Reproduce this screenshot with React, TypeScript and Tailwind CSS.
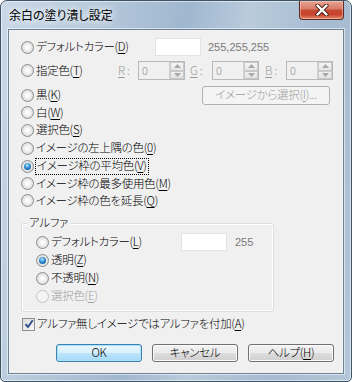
import React from "react";

const U = ({ c }: { c: string }) => (
  <span className="underline underline-offset-[2px] decoration-[1px]">{c}</span>
);

function Radio({ checked = false, disabled = false }: { checked?: boolean; disabled?: boolean }) {
  return (
    <span
      className={
        "inline-flex w-[13px] h-[13px] rounded-full border items-center justify-center shrink-0 " +
        (disabled
          ? "border-[#c4c4c4] bg-[#f4f4f4]"
          : "border-[#8a8c8e] bg-[radial-gradient(circle_at_50%_50%,#fbfbfb_20%,#e4e4e4_60%,#cfcfcf_100%)]")
      }
    >
      {checked && (
        <span className="w-[7px] h-[7px] rounded-full bg-[radial-gradient(circle_at_45%_35%,#b8ecff_0%,#2d8ad0_45%,#0d4d8a_100%)]" />
      )}
    </span>
  );
}

function Spin() {
  return (
    <div className="flex h-[19px] w-[47px] border border-[#b5babe] bg-[#f0f0f0]">
      <div className="flex-1 flex items-center pl-[3px] text-[11px] text-[#8d8d8d] leading-none">0</div>
      <div className="flex flex-col w-[15px] border-l border-[#d2d2d2]">
        <div className="flex-1 flex items-center justify-center border border-[#c9c9c9] bg-[linear-gradient(#f6f6f6,#e6e6e6)]">
          <svg width="7" height="4" viewBox="0 0 7 4"><path d="M0 4 L3.5 0 L7 4 Z" fill="#a8a8a8" /></svg>
        </div>
        <div className="flex-1 flex items-center justify-center border border-[#c9c9c9] bg-[linear-gradient(#f2f2f2,#e2e2e2)]">
          <svg width="7" height="4" viewBox="0 0 7 4"><path d="M0 0 L3.5 4 L7 0 Z" fill="#a8a8a8" /></svg>
        </div>
      </div>
    </div>
  );
}

function Row({ children, className = "" }: { children: React.ReactNode; className?: string }) {
  return <div className={"flex items-center " + className}>{children}</div>;
}

function Btn({ children, def = false }: { children: React.ReactNode; def?: boolean }) {
  return (
    <div
      className={
        "w-[86px] h-[18px] rounded-[3px] border flex items-center justify-center leading-none " +
        (def
          ? "border-[#3c7fb1] bg-[linear-gradient(#eaf6fd_0%,#d9f0fc_50%,#bee6fd_51%,#a7d9f5_100%)] shadow-[inset_0_0_0_1px_#a8e4fb]"
          : "border-[#707070] bg-[linear-gradient(#f2f2f2_0%,#ebebeb_50%,#dddddd_51%,#cfcfcf_100%)] shadow-[inset_0_0_0_1px_#fcfcfc]")
      }
    >
      {children}
    </div>
  );
}

export default function App() {
  return (
    <div className="w-[352px] h-[382px] font-['Noto_Sans_CJK_JP',sans-serif] font-light [font-feature-settings:'palt'] text-black">
      <div className="w-full h-full rounded-t-[7px] rounded-b-[5px] border border-[#3f5366] bg-[linear-gradient(100deg,#c9d8e6_0%,#b5c8db_25%,#9fb7cf_45%,#b9cbdc_60%,#a5bbd1_80%,#b4c6d8_100%)] shadow-[inset_0_0_0_1px_rgba(255,255,255,0.55)] flex flex-col px-[7px] pb-[7px]">
        <div className="h-[28px] flex items-start justify-between">
          <div className="pt-[6px] pl-[1px] text-[12px] font-normal leading-[16px] [text-shadow:0_0_6px_#fff,0_0_10px_rgba(255,255,255,0.8)]">
            余白の塗り潰し設定
          </div>
          <div className="w-[45px] h-[19px] rounded-b-[4px] border border-t-0 border-[#5d2b23] bg-[linear-gradient(#e8a493_0%,#d67a66_45%,#c64a33_50%,#c9432c_75%,#e28b6b_100%)] shadow-[inset_0_0_0_1px_rgba(255,220,210,0.45)] flex items-center justify-center">
            <svg width="14" height="12" viewBox="0 0 14 12">
              <path d="M2.5 1.5 L11.5 10.5 M11.5 1.5 L2.5 10.5" stroke="#4a1f18" strokeWidth="4.2" strokeLinecap="round" />
              <path d="M2.5 1.5 L11.5 10.5 M11.5 1.5 L2.5 10.5" stroke="#ffffff" strokeWidth="2.4" strokeLinecap="round" />
            </svg>
          </div>
        </div>
        <div className="flex-1 bg-[#f0f0f0] border border-[#6e8398] shadow-[0_0_0_1px_rgba(255,255,255,0.55)] flex flex-col pl-[12px] pt-[8px] text-[11.5px] tracking-[-0.3px] leading-none">
          <Row className="h-[18px]">
            <div className="w-[134px] flex items-center gap-[2px]">
              <Radio />
              <span>デフォルトカラー(<U c="D" />)</span>
            </div>
            <div className="w-[46px] h-[18px] bg-white border border-[#e3e3e3]" />
            <span className="ml-[7px] text-[#7a7a7a] text-[11px] tracking-normal font-['Liberation_Sans',sans-serif]">255,255,255</span>
          </Row>
          <Row className="h-[19px] mt-[5px]">
            <div className="w-[97px] flex items-center gap-[2px]">
              <Radio />
              <span>指定色(<U c="T" />)</span>
            </div>
            <span className="w-[20px] text-[#9a9a9a]"><U c="R" /> :</span>
            <Spin />
            <span className="ml-[5px] w-[22px] text-[#9a9a9a]"><U c="G" /> :</span>
            <Spin />
            <span className="ml-[6px] w-[21px] text-[#9a9a9a]"><U c="B" /> :</span>
            <Spin />
          </Row>
          <Row className="h-[18px] mt-[6px] justify-between pr-[13px]">
            <div className="flex items-center gap-[2px]">
              <Radio />
              <span>黒(<U c="K" />)</span>
            </div>
            <div className="w-[128px] h-[19px] rounded-[3px] border border-[#adb2b5] bg-[#f4f4f4] flex items-center justify-center text-[#9a9a9a]">
              イメージから選択(<U c="I" />)...
            </div>
          </Row>
          <Row className="h-[17px] gap-[2px]"><Radio /><span>白(<U c="W" />)</span></Row>
          <Row className="h-[18px] gap-[2px]"><Radio /><span>選択色(<U c="S" />)</span></Row>
          <Row className="h-[18px] gap-[2px]"><Radio /><span>イメージの左上隅の色(<U c="0" />)</span></Row>
          <Row className="h-[18px] gap-[1px]">
            <Radio checked />
            <span className="h-[17px] flex items-center px-[1px] border border-dotted border-black">イメージ枠の平均色(<U c="V" />)</span>
          </Row>
          <Row className="h-[17px] gap-[2px]"><Radio /><span>イメージ枠の最多使用色(<U c="M" />)</span></Row>
          <Row className="h-[17px] gap-[2px]"><Radio /><span>イメージ枠の色を延長(<U c="Q" />)</span></Row>

          <div className="relative mt-[14px] w-[253px] rounded-[3px] border border-[#d5dfe5] shadow-[inset_0_0_0_1px_#ffffff] pl-[14px] pt-[9px] pb-[6px]">
            <span className="absolute left-[5px] top-[-7px] px-[2px] bg-[#f0f0f0]">アルファ</span>
            <Row className="h-[18px]">
              <div className="w-[145px] flex items-center gap-[2px]">
                <Radio />
                <span>デフォルトカラー(<U c="L" />)</span>
              </div>
              <div className="w-[46px] h-[18px] bg-white border border-[#e3e3e3]" />
              <span className="ml-[8px] text-[#7a7a7a] text-[11px] tracking-normal font-['Liberation_Sans',sans-serif]">255</span>
            </Row>
            <Row className="h-[18px] gap-[2px]"><Radio checked /><span>透明(<U c="Z" />)</span></Row>
            <Row className="h-[18px] gap-[2px]"><Radio /><span>不透明(<U c="N" />)</span></Row>
            <Row className="h-[18px] gap-[2px]"><Radio disabled /><span className="text-[#a0a0a0]">選択色(<U c="E" />)</span></Row>
          </div>

          <Row className="h-[18px] mt-[3px] gap-[2px] pl-[1px]">
            <span className="w-[13px] h-[13px] border border-[#8f8f8f] bg-[linear-gradient(135deg,#dcdcdc,#f8f8f8)] flex items-center justify-center shrink-0">
              <svg width="10" height="10" viewBox="0 0 10 10">
                <path d="M1.5 5.2 L4 8 L8.7 1.3" fill="none" stroke="#2a4a8a" strokeWidth="1.9" />
              </svg>
            </span>
            <span>アルファ無しイメージではアルファを付加(<U c="A" />)</span>
          </Row>

          <div className="flex mt-[11px] pl-[35px] gap-[10px]">
            <Btn def>OK</Btn>
            <Btn>キャンセル</Btn>
            <Btn>ヘルプ(<U c="H" />)</Btn>
          </div>
        </div>
      </div>
    </div>
  );
}
